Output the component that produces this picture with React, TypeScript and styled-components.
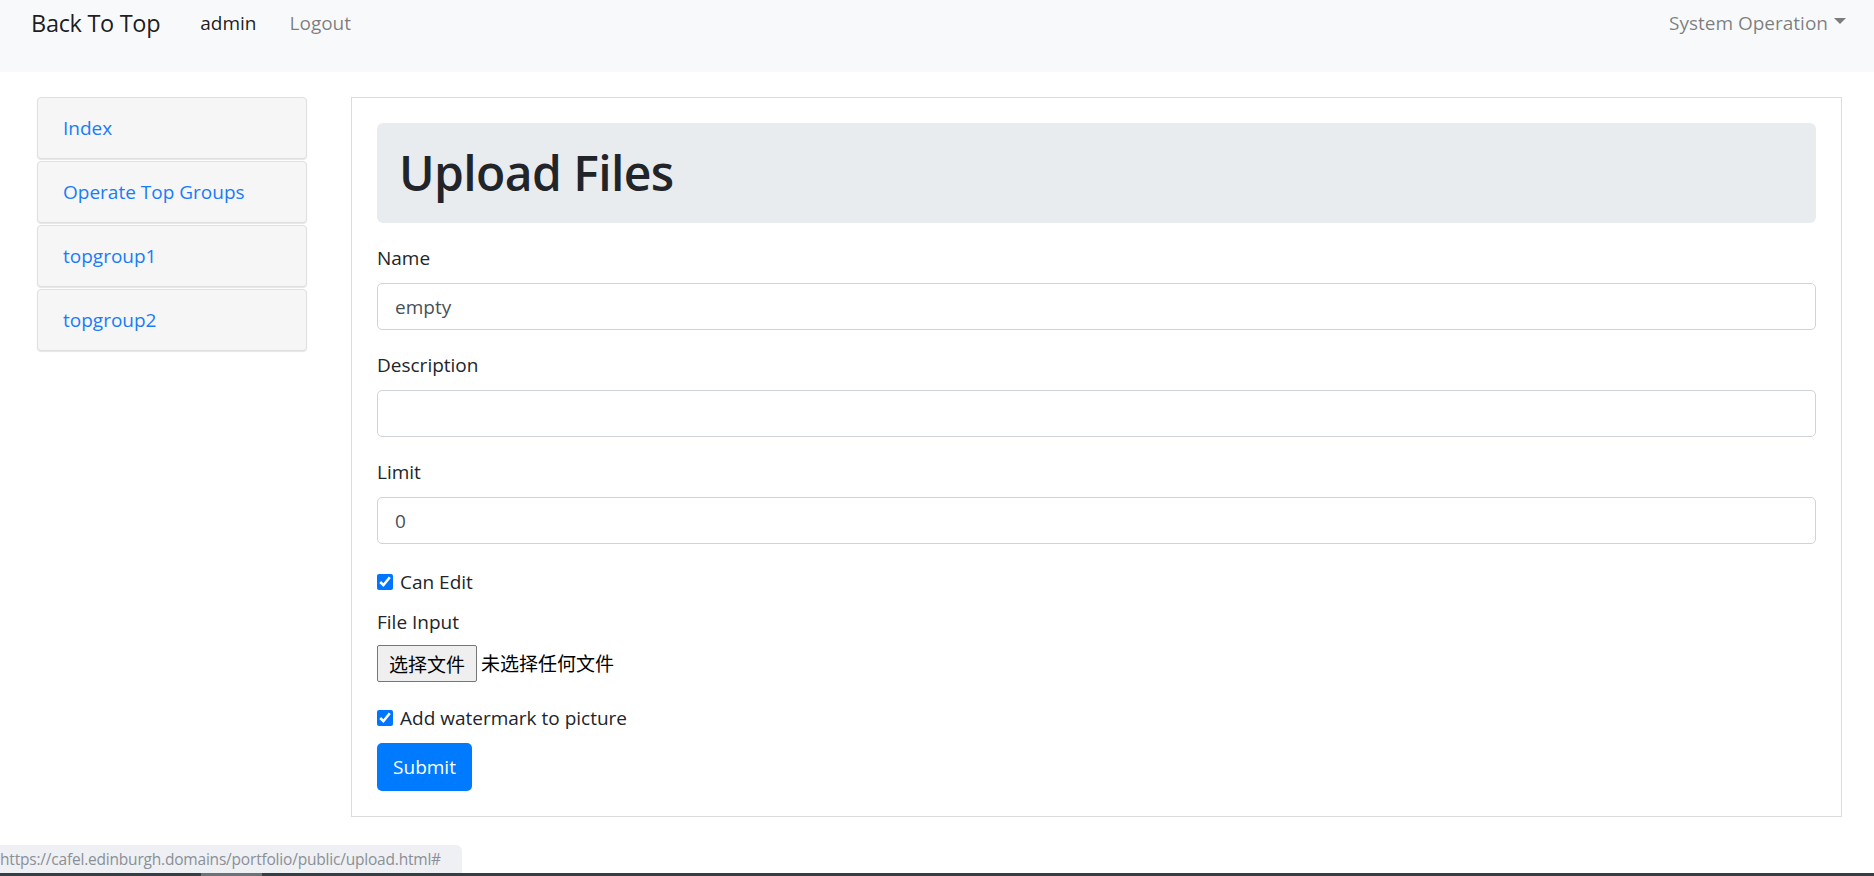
import React from "react";
import styled, { createGlobalStyle } from "styled-components";

const GlobalStyle = createGlobalStyle`
  html, body { margin: 0; padding: 0; background: #fff; }
  body {
    font-family: "Open Sans", "Noto Sans", "Noto Sans CJK SC", sans-serif;
    font-size: 20px;
    line-height: 1.5;
    color: #212529;
  }
  * { box-sizing: border-box; }
`;

const Page = styled.div`
  min-height: 876px;
  display: flex;
  flex-direction: column;
`;

const Navbar = styled.nav`
  height: 72px;
  background: #f8f9fa;
  display: flex;
  align-items: flex-start;
  padding: 5px 28px 0 31px;
`;

const Brand = styled.a`
  font-size: 23.5px;
  line-height: 36px;
  color: rgba(0, 0, 0, 0.9);
  text-decoration: none;
  margin-right: 40px;
  letter-spacing: -0.3px;
`;

const NavLinks = styled.div`
  display: flex;
  gap: 33px;
  flex: 1;
`;

const NavLink = styled.a<{ $active?: boolean }>`
  font-size: 19px;
  line-height: 30px;
  padding-top: 3px;
  color: ${(p) => (p.$active ? "rgba(0,0,0,0.9)" : "rgba(0,0,0,0.5)")};
  text-decoration: none;
`;

const Dropdown = styled.a`
  font-size: 19px;
  line-height: 30px;
  padding-top: 3px;
  color: rgba(0, 0, 0, 0.5);
  text-decoration: none;
  display: flex;
  align-items: center;
  gap: 6px;
  &::after {
    content: "";
    border-top: 6px solid rgba(0, 0, 0, 0.5);
    border-left: 6px solid transparent;
    border-right: 6px solid transparent;
    margin-top: -4px;
  }
`;

const Body = styled.div`
  display: flex;
  align-items: flex-start;
  padding: 25px 32px 0 37px;
  gap: 44px;
`;

const Sidebar = styled.div`
  width: 270px;
  flex: none;
  display: flex;
  flex-direction: column;
  gap: 2px;
`;

const SideItem = styled.a`
  height: 62px;
  display: flex;
  align-items: center;
  padding-left: 25px;
  background: #f6f6f6;
  border: 1px solid #e0e0e0;
  border-radius: 4px;
  box-shadow: 0 1px 1px rgba(0, 0, 0, 0.1);
  color: #1a7cf6;
  font-size: 19px;
  text-decoration: none;
`;

const Card = styled.div`
  flex: 1;
  border: 1px solid #dcdcdc;
  padding: 25px;
`;

const Jumbo = styled.div`
  height: 100px;
  background: #e9ecef;
  border-radius: 6px;
  padding-left: 22px;
  display: flex;
  align-items: center;
  margin-bottom: 20px;
`;

const Title = styled.h1`
  margin: 0;
  font-size: 48px;
  font-weight: 600;
  line-height: 1.2;
  color: #212529;
  letter-spacing: -0.6px;
`;

const Group = styled.div`
  margin-bottom: 20px;
`;

const Label = styled.label`
  display: block;
  font-size: 19px;
  line-height: 30px;
  margin-bottom: 10px;
  color: #212529;
  padding-top: 2px;
  margin-top: -2px;
`;

const Input = styled.input`
  display: block;
  width: 100%;
  height: 47px;
  padding: 0 17px;
  font-family: inherit;
  font-size: 19px;
  color: #495057;
  background: #fff;
  border: 1px solid #ced4da;
  border-radius: 5px;
  outline: none;
`;

const CheckRow = styled.label<{ $mt: number; $mb: number }>`
  display: flex;
  align-items: center;
  gap: 7px;
  height: 30px;
  font-size: 19px;
  margin-top: ${(p) => p.$mt}px;
  margin-bottom: ${(p) => p.$mb}px;
  color: #212529;
`;

const Check = styled.input`
  width: 16px;
  height: 16px;
  margin: 0;
  accent-color: #0075ff;
`;

const FileLabel = styled(Label)`
  margin-bottom: 8px;
`;

const FileRow = styled.div`
  display: flex;
  align-items: center;
  gap: 4px;
  margin-bottom: 21px;
  font-family: "Noto Sans CJK SC", sans-serif;
  font-size: 19px;
  color: #000;
`;

const FileButton = styled.button`
  height: 37px;
  width: 100px;
  padding: 0;
  font-family: "Noto Sans CJK SC", sans-serif;
  font-size: 19px;
  color: #000;
  background: #efefef;
  border: 1px solid #767676;
  border-radius: 2px;
`;

const Submit = styled.button`
  margin-top: 10px;
  width: 95px;
  height: 48px;
  background: #007bff;
  color: #fff;
  border: none;
  border-radius: 5px;
  font-family: inherit;
  font-size: 19px;
`;

const StatusBubble = styled.div`
  position: fixed;
  left: 0;
  bottom: 3px;
  width: 462px;
  height: 28px;
  background: #eff0f3;
  border-top-right-radius: 6px;
  color: #8a8f98;
  font-size: 15.5px;
  line-height: 28px;
  white-space: nowrap;
  overflow: hidden;
  letter-spacing: -0.2px;
`;

const TaskEdge = styled.div`
  position: fixed;
  left: 0;
  right: 0;
  bottom: 0;
  height: 3px;
  background: #343e44;
  &::after {
    content: "";
    position: absolute;
    left: 201px;
    width: 61px;
    top: 0;
    bottom: 0;
    background: #6b7378;
  }
`;

export default function App() {
  return (
    <Page>
      <GlobalStyle />
      <Navbar>
        <Brand href="#">Back To Top</Brand>
        <NavLinks>
          <NavLink $active href="#">admin</NavLink>
          <NavLink href="#">Logout</NavLink>
        </NavLinks>
        <Dropdown href="#">System Operation</Dropdown>
      </Navbar>
      <Body>
        <Sidebar>
          <SideItem href="#">Index</SideItem>
          <SideItem href="#">Operate Top Groups</SideItem>
          <SideItem href="#">topgroup1</SideItem>
          <SideItem href="#">topgroup2</SideItem>
        </Sidebar>
        <Card>
          <Jumbo>
            <Title>Upload Files</Title>
          </Jumbo>
          <Group>
            <Label>Name</Label>
            <Input defaultValue="empty" />
          </Group>
          <Group>
            <Label>Description</Label>
            <Input defaultValue="" />
          </Group>
          <Group>
            <Label>Limit</Label>
            <Input defaultValue="0" />
          </Group>
          <CheckRow $mt={23} $mb={10}>
            <Check type="checkbox" defaultChecked />
            Can Edit
          </CheckRow>
          <FileLabel>File Input</FileLabel>
          <FileRow>
            <FileButton>选择文件</FileButton>
            <span>未选择任何文件</span>
          </FileRow>
          <CheckRow $mt={0} $mb={0}>
            <Check type="checkbox" defaultChecked />
            Add watermark to picture
          </CheckRow>
          <Submit>Submit</Submit>
        </Card>
      </Body>
      <StatusBubble>https://cafel.edinburgh.domains/portfolio/public/upload.html#</StatusBubble>
      <TaskEdge />
    </Page>
  );
}
